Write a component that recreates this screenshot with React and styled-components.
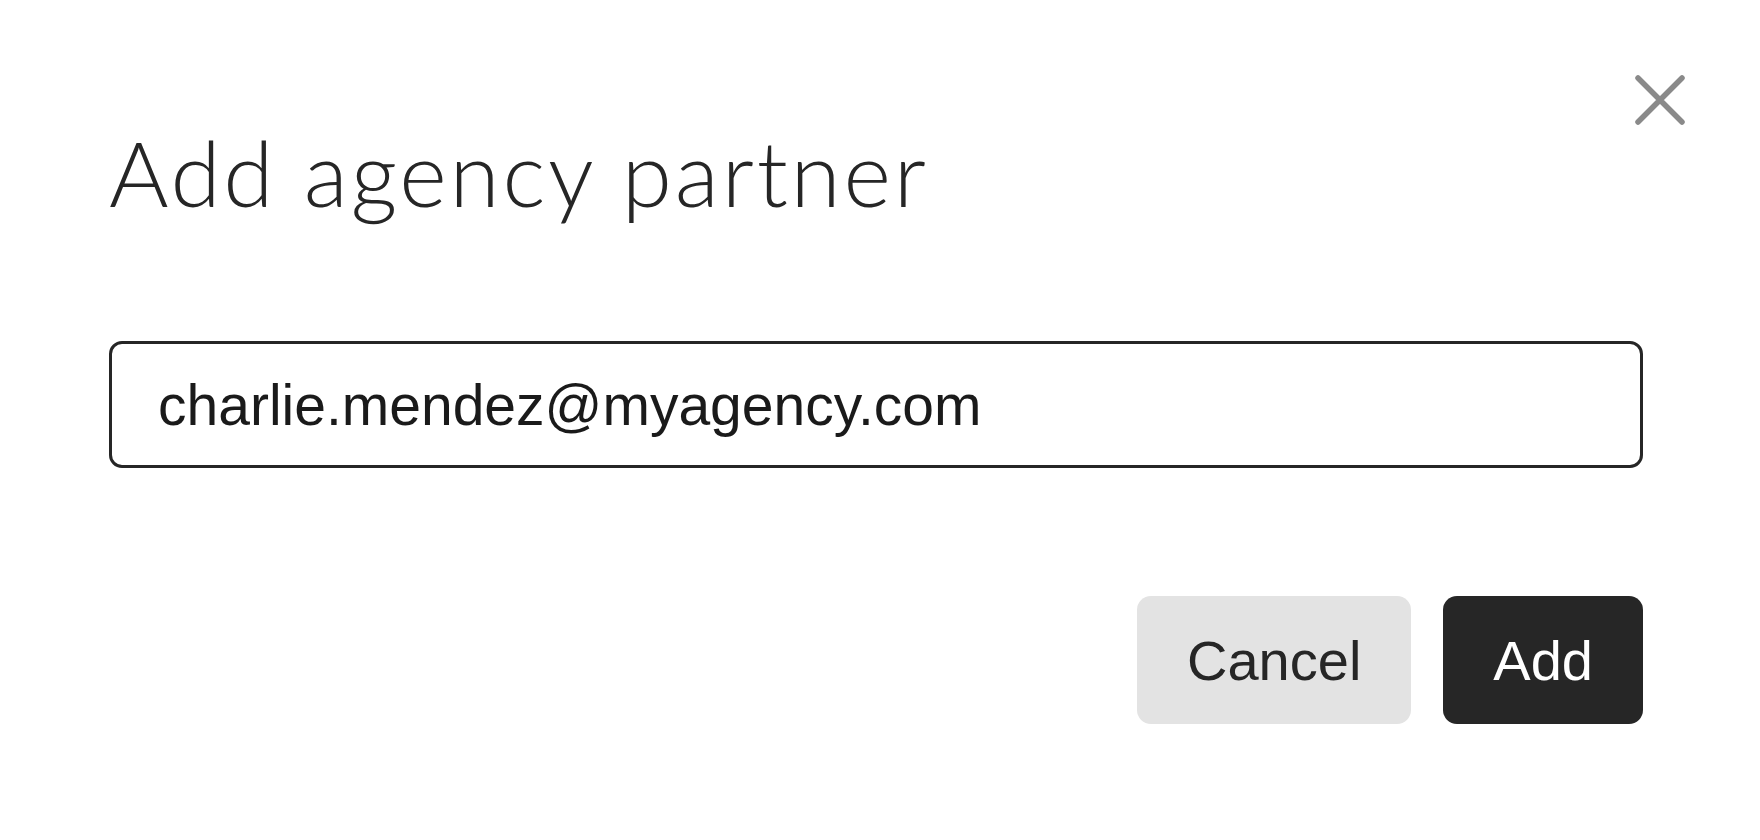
import React, { useState } from 'react';
import styled, { createGlobalStyle } from 'styled-components';

//-----------------------------------------------{global}------------------------------------------------------//

const GlobalStyle = createGlobalStyle`
    html, body {
        margin: 0;
        padding: 0;
        background: #fff;
    }
    * {
        box-sizing: border-box;
    }
`;

//-----------------------------------------------{styled components}------------------------------------------------------//

const Dialog = styled.div`
    position: relative;
    width: 1760px;
    height: 840px;
    background: #fff;
    padding: 126px 117px 0 109px;
    display: flex;
    flex-direction: column;
    font-family: 'Liberation Sans', Arial, sans-serif;
`;

const CloseButton = styled.button`
    position: absolute;
    top: 75px;
    right: 75px;
    width: 50px;
    height: 50px;
    padding: 0;
    border: none;
    background: transparent;
    cursor: pointer;
    display: flex;
    align-items: center;
    justify-content: center;
`;

const Title = styled.h1`
    margin: 0;
    font-family: 'Lato', 'Liberation Sans', sans-serif;
    font-weight: 300;
    font-size: 91px;
    line-height: 1;
    color: #262626;
    letter-spacing: 2.8px;
`;

const EmailInput = styled.input`
    margin-top: 124px;
    width: 100%;
    height: 127px;
    border: 3px solid #262626;
    border-radius: 13px;
    padding: 0 46px;
    font-family: 'Liberation Sans', Arial, sans-serif;
    font-size: 57px;
    color: #1a1a1a;
    background: #fff;
    outline: none;
`;

const Actions = styled.div`
    margin-top: 128px;
    display: flex;
    justify-content: flex-end;
    gap: 32px;
`;

const Button = styled.button`
    height: 128px;
    padding: 0 50px;
    border: none;
    border-radius: 14px;
    font-family: 'Liberation Sans', Arial, sans-serif;
    font-size: 56px;
    cursor: pointer;
    background: ${(p) => (p.$primary ? '#262626' : '#e3e3e3')};
    color: ${(p) => (p.$primary ? '#fff' : '#262626')};
`;

//-----------------------------------------------{App}------------------------------------------------------//

const App = () => {
    const [email, setEmail] = useState('charlie.mendez@myagency.com');

    return (
        <>
            <GlobalStyle />
            <Dialog>
                <CloseButton aria-label="Close">
                    <svg width="50" height="50" viewBox="0 0 50 50">
                        <path d="M3 3 L47 47 M47 3 L3 47" stroke="#8a8a8a" strokeWidth="5.5" strokeLinecap="round" />
                    </svg>
                </CloseButton>
                <Title>Add agency partner</Title>
                <EmailInput value={email} onChange={(e) => setEmail(e.target.value)} />
                <Actions>
                    <Button>Cancel</Button>
                    <Button $primary>Add</Button>
                </Actions>
            </Dialog>
        </>
    );
};

export default App;
